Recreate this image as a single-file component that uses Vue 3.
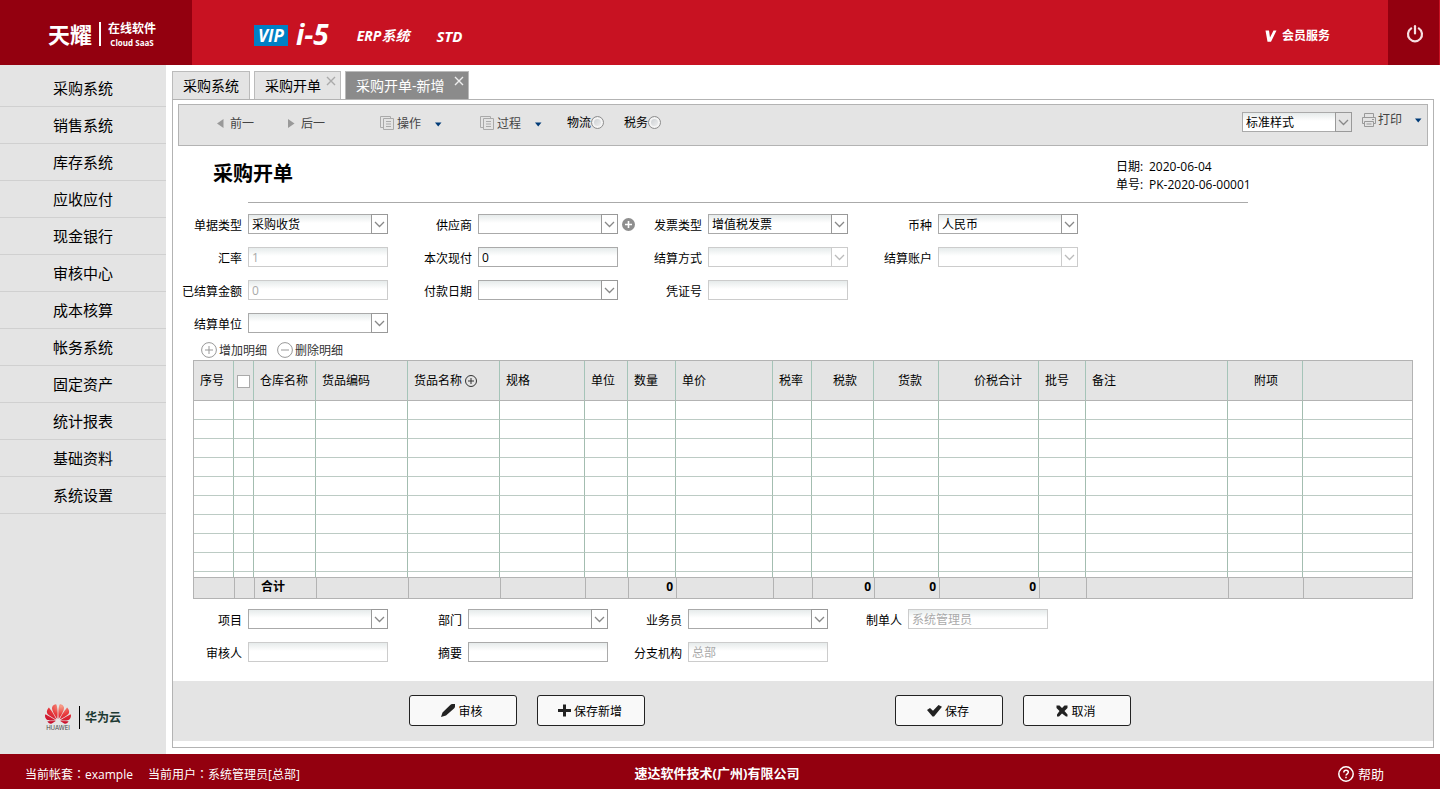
<script setup>
const modules = [
  '采购系统', '销售系统', '库存系统', '应收应付', '现金银行', '审核中心',
  '成本核算', '帐务系统', '固定资产', '统计报表', '基础资料', '系统设置',
]

const tabs = [
  { title: '采购系统' },
  { title: '采购开单', closable: true },
  { title: '采购开单-新增', closable: true, active: true },
]

const headRows = [
  [
    { id: 'docType', label: '单据类型', type: 'select', value: '采购收货' },
    { id: 'supplier', label: '供应商', type: 'select', value: '', add: true },
    { id: 'invoice', label: '发票类型', type: 'select', value: '增值税发票' },
    { id: 'currency', label: '币种', type: 'select', value: '人民币' },
  ],
  [
    { id: 'rate', label: '汇率', type: 'text', value: '1', disabled: true },
    { id: 'payNow', label: '本次现付', type: 'text', value: '0' },
    { id: 'payWay', label: '结算方式', type: 'select', value: '', disabled: true },
    { id: 'account', label: '结算账户', type: 'select', value: '', disabled: true },
  ],
  [
    { id: 'settled', label: '已结算金额', type: 'text', value: '0', disabled: true },
    { id: 'payDate', label: '付款日期', type: 'select', value: '' },
    { id: 'voucher', label: '凭证号', type: 'text', value: '', disabled: true },
  ],
  [{ id: 'settleUnit', label: '结算单位', type: 'select', value: '' }],
]

const footRows = [
  [
    { id: 'project', label: '项目', type: 'select', value: '' },
    { id: 'dept', label: '部门', type: 'select', value: '' },
    { id: 'clerk', label: '业务员', type: 'select', value: '' },
    { id: 'maker', label: '制单人', type: 'text', value: '系统管理员', disabled: true },
  ],
  [
    { id: 'auditor', label: '审核人', type: 'text', value: '', disabled: true },
    { id: 'summary', label: '摘要', type: 'text', value: '' },
    { id: 'branch', label: '分支机构', type: 'text', value: '总部', disabled: true },
  ],
]

const sections = [
  { name: 'head', rows: headRows },
  { name: 'foot', rows: footRows },
]

const columns = [
  { title: '序号', width: 40 },
  { title: '', width: 20, check: true },
  { title: '仓库名称', width: 62, total: '合计' },
  { title: '货品编码', width: 92 },
  { title: '货品名称', width: 92, add: true },
  { title: '规格', width: 85 },
  { title: '单位', width: 43 },
  { title: '数量', width: 48, total: '0' },
  { title: '单价', width: 97 },
  { title: '税率', width: 39 },
  { title: '税款', width: 62, align: 'right', total: '0' },
  { title: '货款', width: 65, align: 'right', total: '0' },
  { title: '价税合计', width: 100, align: 'right', total: '0' },
  { title: '批号', width: 47 },
  { title: '备注', width: 142 },
  { title: '附项', width: 75, align: 'center' },
  { title: '', width: 0 },
]
</script>

<template>
  <div class="app">
    <header class="top">
      <div class="brand">
        <strong class="brand-name">天耀</strong>
        <span class="brand-sub">
          <b>在线软件</b>
          <i>Cloud SaaS</i>
        </span>
      </div>
      <nav class="products">
        <a href="#" class="vip">VIP</a>
        <a href="#" class="i5">i-5</a>
        <a href="#" class="erp">ERP系统</a>
        <a href="#" class="std">STD</a>
      </nav>
      <a href="#" class="member">
        <svg width="12" height="12" viewBox="0 0 12 12"><path d="M0.5 0.5H4L5 7.5L8.5 0.5H11.5L6 11.8H2.5Z" fill="#fff" /></svg>
        会员服务
      </a>
      <button class="power" aria-label="退出">
        <svg width="18" height="18" viewBox="0 0 18 18" fill="none" stroke="#f6dfe1" stroke-width="2.2" stroke-linecap="round">
          <path d="M5.2 3.4A7 7 0 1 0 12.8 3.4" />
          <path d="M9 1.2V8.4" />
        </svg>
      </button>
    </header>

    <div class="body">
      <aside class="side">
        <nav class="menu">
          <a v-for="m in modules" :key="m" href="#">{{ m }}</a>
        </nav>
        <div class="cloud">
          <span class="cloud-mark">
            <svg width="26" height="20" viewBox="0 2.9 24 18.3">
              <defs>
                <radialGradient id="petal" cx="0.62" cy="0.1" r="0.9">
                  <stop offset="0" stop-color="#f7a08a" />
                  <stop offset="0.5" stop-color="#e8383b" />
                  <stop offset="1" stop-color="#c8102e" />
                </radialGradient>
              </defs>
              <path fill="url(#petal)" d="M3.67 6.14S1.82 7.91 1.72 9.78v.35c.08 1.51 1.22 2.4 1.22 2.4 1.83 1.79 6.26 4.04 7.3 4.55 0 0 .06.03.1-.01l.02-.04v-.04C7.52 10.8 3.67 6.14 3.67 6.14zM9.65 18.6c-.02-.08-.1-.08-.1-.08l-7.38.26c.8 1.43 2.15 2.53 3.56 2.2.96-.25 3.16-1.78 3.88-2.3.06-.05.04-.09.04-.09zm.08-.78C6.49 15.63.21 12.28.21 12.28c-.15.46-.2.9-.21 1.3v.07c0 1.07.4 1.82.4 1.82.8 1.69 2.34 2.2 2.34 2.2.7.3 1.4.31 1.4.31.12.02 4.4 0 5.54 0 .05 0 .08-.05.08-.05v-.06c0-.03-.03-.05-.03-.05zM9.06 3.19a3.42 3.42 0 00-2.57 3.15v.41c.03.6.16 1.05.16 1.05.66 2.9 3.86 7.65 4.55 8.65.05.05.1.03.1.03a.1.1 0 00.06-.1c1.06-10.6-1.11-13.42-1.11-13.42-.32.02-1.19.23-1.19.23zm8.299 2.27s-.49-1.8-2.44-2.28c0 0-.57-.14-1.17-.22 0 0-2.18 2.81-1.12 13.43.01.07.06.08.06.08.07.03.1-.03.1-.03.72-1.03 3.9-5.76 4.55-8.64 0 0 .36-1.4.02-2.34zm-2.92 13.07s-.07 0-.09.05c0 0-.01.07.03.1.7.51 2.85 2 3.88 2.3 0 0 .16.05.43.06h.14c.69-.02 1.9-.37 3-2.26l-7.4-.25zm7.83-8.41c.14-2.06-1.94-3.97-1.94-3.98 0 0-3.85 4.66-6.67 10.8 0 0-.03.08.02.13l.04.01h.06c1.06-.53 5.46-2.77 7.28-4.54 0 0 1.15-.93 1.21-2.42zm1.52 2.14s-6.28 3.37-9.52 5.55c0 0-.05.04-.03.11 0 0 .03.06.07.06 1.16 0 5.56 0 5.67-.02 0 0 .57-.02 1.27-.29 0 0 1.56-.5 2.37-2.27 0 0 .73-1.45.17-3.14z" />
            </svg>
            <small>HUAWEI</small>
          </span>
          <b>华为云</b>
        </div>
      </aside>

      <main class="main">
        <div class="tabs">
          <div v-for="t in tabs" :key="t.title" class="tab" :class="{ active: t.active, closable: t.closable }">
            <a href="#">{{ t.title }}</a>
            <button v-if="t.closable" class="close" aria-label="关闭">
              <svg width="10" height="10" viewBox="0 0 10 10" fill="none" stroke="currentColor" stroke-width="1.4"><path d="M1 1L9 9M9 1L1 9" /></svg>
            </button>
          </div>
        </div>

        <section class="panel">
          <div class="toolbar">
            <button class="tool prev">
              <svg width="7" height="9" viewBox="0 0 7 9"><path d="M6.5 0V9L0 4.5Z" fill="#999" /></svg>
              <span>前一</span>
            </button>
            <button class="tool next">
              <svg width="7" height="9" viewBox="0 0 7 9"><path d="M0 0V9L6.5 4.5Z" fill="#999" /></svg>
              <span>后一</span>
            </button>
            <button v-for="name in ['操作', '过程']" :key="name" class="tool drop">
              <svg width="14" height="14" viewBox="0 0 14 14" fill="none" stroke="#aaa">
                <path d="M3 11.5H0.5V0.5H10.5V2" />
                <path d="M3.5 2.5H13.5V13.5H3.5Z" />
                <path d="M6 5.5H11M6 8H11M6 10.5H11" />
              </svg>
              <span>{{ name }}</span>
              <svg class="caret" width="7" height="5" viewBox="0 0 7 5"><path d="M0 0.5H6.5L3.2 4.5Z" fill="#003b78" /></svg>
            </button>
            <label class="flag"><span>物流</span><input type="radio" name="logistics" /></label>
            <label class="flag"><span>税务</span><input type="radio" name="tax" /></label>
            <span class="box style-box">
              <select aria-label="打印样式"><option>标准样式</option></select>
              <span class="arrow">
                <svg width="11" height="7" viewBox="0 0 11 7" fill="none" stroke="currentColor" stroke-width="1.3"><path d="M1 1L5.5 5.5L10 1" /></svg>
              </span>
            </span>
            <button class="tool print">
              <svg width="14" height="14" viewBox="0 0 14 14" fill="none" stroke="#999">
                <path d="M2.5 4.5V0.5H11.5V4.5" />
                <path d="M2.5 10.5H0.5V4.5H13.5V10.5H11.5" />
                <path d="M2.5 8.5H11.5V13.5H2.5Z" />
                <path d="M10 6.5H12M4.5 11H9.5" />
              </svg>
              打印
              <svg class="caret" width="7" height="5" viewBox="0 0 7 5"><path d="M0 0.5H6.5L3.2 4.5Z" fill="#003b78" /></svg>
            </button>
          </div>

          <div class="doc-head">
            <h1>采购开单</h1>
            <dl>
              <div><dt>日期:</dt><dd>2020-06-04</dd></div>
              <div><dt>单号:</dt><dd>PK-2020-06-00001</dd></div>
            </dl>
          </div>
          <hr />

          <template v-for="s in sections" :key="s.name">
            <form class="fields" :class="s.name" @submit.prevent>
              <div v-for="(row, r) in s.rows" :key="r" class="row">
                <div v-for="f in row" :key="f.id" class="field">
                  <label :for="f.id">{{ f.label }}</label>
                  <span v-if="f.type === 'select'" class="box" :class="{ off: f.disabled }">
                    <select :id="f.id" :disabled="f.disabled"><option>{{ f.value }}</option></select>
                    <span class="arrow">
                      <svg width="11" height="7" viewBox="0 0 11 7" fill="none" stroke="currentColor" stroke-width="1.3"><path d="M1 1L5.5 5.5L10 1" /></svg>
                    </span>
                  </span>
                  <span v-else class="box" :class="{ off: f.disabled }">
                    <input :id="f.id" type="text" :value="f.value" :disabled="f.disabled" />
                  </span>
                  <button v-if="f.add" type="button" class="plus" aria-label="新增供应商">
                    <svg width="13" height="13" viewBox="0 0 13 13"><circle cx="6.5" cy="6.5" r="6.5" fill="#8e8e8e" /><path d="M3 6.5H10M6.5 3V10" stroke="#fff" stroke-width="1.6" /></svg>
                  </button>
                </div>
              </div>
            </form>

            <template v-if="s.name === 'head'">
              <div class="detail-tools">
                <button>
                  <svg width="16" height="16" viewBox="0 0 16 16" fill="none" stroke="#999"><circle cx="8" cy="8" r="7.4" /><path d="M4 8H12M8 4V12" /></svg>
                  <span>增加明细</span>
                </button>
                <button>
                  <svg width="16" height="16" viewBox="0 0 16 16" fill="none" stroke="#999"><circle cx="8" cy="8" r="7.4" /><path d="M4 8H12" /></svg>
                  <span>删除明细</span>
                </button>
              </div>

              <div class="grid">
                <table>
                  <colgroup>
                    <col v-for="(c, i) in columns" :key="i" :style="c.width ? { width: c.width + 'px' } : null" />
                  </colgroup>
                  <thead>
                    <tr>
                      <th v-for="(c, i) in columns" :key="i" :class="[c.align, { check: c.check }]">
                        <input v-if="c.check" type="checkbox" aria-label="全选" />
                        <template v-else>{{ c.title }}</template>
                        <svg v-if="c.add" class="col-add" width="12" height="12" viewBox="0 0 12 12" fill="none" stroke="#333"><circle cx="6" cy="6" r="5.5" /><path d="M3 6H9M6 3V9" /></svg>
                      </th>
                    </tr>
                  </thead>
                  <tbody>
                    <tr v-for="n in 10" :key="n"><td v-for="(c, i) in columns" :key="i"></td></tr>
                  </tbody>
                  <tfoot>
                    <tr>
                      <td v-for="(c, i) in columns" :key="i" :class="{ num: c.total === '0' }">{{ c.total }}</td>
                    </tr>
                  </tfoot>
                </table>
              </div>
            </template>
          </template>

          <div class="actions">
            <button>
              <svg width="14" height="13" viewBox="0 0 14 13"><path d="M0 13L1.5 8.5L9 1.2Q10 0 11.5 0H14V2.5Q14 3.5 13 4.5L5 11.5Z" fill="#222" /></svg>
              <span>审核</span>
            </button>
            <button>
              <svg width="13" height="13" viewBox="0 0 13 13"><path d="M5 0.5H8V5H13V8H8V12.5H5V8H0V5H5Z" fill="#222" /></svg>
              <span>保存新增</span>
            </button>
            <button class="save">
              <svg width="15" height="12" viewBox="0 0 15 12"><path d="M0 5L3 3L6 5.8L11.5 0L15 1.8L7 11.5H5.5Z" fill="#222" /></svg>
              <span>保存</span>
            </button>
            <button>
              <svg width="12" height="12" viewBox="0 0 12 12"><path d="M0.5 0.5H3.5L6 3L8.5 0.5H11.5V3L8.5 6L11.5 9.5V11.5H10L6 8.5L3 11.5H1V9.5L3.5 6L0.5 3Z" fill="#222" /></svg>
              <span>取消</span>
            </button>
          </div>
        </section>
      </main>
    </div>

    <footer class="bottom">
      <p class="session">
        <span>当前帐套<i>：</i>example</span>
        <span>当前用户<i>：</i>系统管理员[总部]</span>
      </p>
      <strong>速达软件技术(广州)有限公司</strong>
      <a href="#" class="help">
        <svg width="16" height="16" viewBox="0 0 16 16" fill="none" stroke="#fff" stroke-width="1.5">
          <circle cx="8" cy="8" r="7.2" />
          <path d="M5.8 6.4C5.8 3.4 10.3 3.6 10.3 6.2C10.3 7.8 8 7.8 8 9.6M8 10.8V12.3" />
        </svg>
        帮助
      </a>
    </footer>
  </div>
</template>

<style>
body {
  margin: 0;
}
</style>

<style scoped>
.app {
  --line: #b3b3b3;
  --gray: #e4e4e4;
  --wine: #93000f;
  display: flex;
  flex-direction: column;
  min-height: 100vh;
  font: 12px/18px "Open Sans", "Noto Sans CJK SC", sans-serif;
  color: #000;
  background: #fff;
}
.app * {
  box-sizing: border-box;
}
a {
  color: inherit;
  text-decoration: none;
}
button {
  padding: 0;
  border: 0;
  background: none;
  font: inherit;
  color: inherit;
  cursor: pointer;
}
svg {
  flex: none;
  display: block;
}

.top {
  display: flex;
  align-items: center;
  height: 65px;
  padding-right: 1px;
  background: #c81222;
  color: #fff;
}
.brand {
  display: flex;
  align-items: center;
  align-self: stretch;
  width: 192px;
  padding: 2px 0 0 48px;
  background: var(--wine);
}
.brand-name {
  padding-right: 7px;
  border-right: 2px solid #fff;
  font-size: 22px;
  line-height: 24px;
}
.brand-sub {
  display: grid;
  justify-items: center;
  margin-left: 7px;
}
.brand-sub b {
  line-height: 17px;
}
.brand-sub i {
  font: bold 8px/11px "Open Sans", sans-serif;
}
.products {
  display: flex;
  align-items: center;
  margin-left: 62px;
  padding-top: 6px;
  font-weight: bold;
  font-style: italic;
  font-size: 15px;
}
.vip {
  width: 34px;
  background: #0080c5;
  font-size: 17px;
  line-height: 21px;
  text-align: center;
}
.i5 {
  margin-left: 8px;
  font-size: 28px;
  line-height: 20px;
  padding-bottom: 4px;
}
.erp {
  margin-left: 28px;
  font-size: 14px;
}
.std {
  margin-left: 27px;
}
.member {
  display: flex;
  align-items: center;
  gap: 5px;
  margin: 7px 58px 0 auto;
  font-weight: bold;
}
.power {
  display: flex;
  align-items: center;
  justify-content: center;
  align-self: stretch;
  width: 51px;
  padding: 2px 0 0 2px;
  background: var(--wine);
}

.body {
  flex: 1;
  display: flex;
}
.side {
  display: flex;
  flex-direction: column;
  width: 166px;
  padding-top: 5px;
  background: var(--gray);
}
.menu a {
  display: block;
  height: 37px;
  border-bottom: 1px solid #d0d0d0;
  font-size: 15px;
  line-height: 36px;
  text-align: center;
}
.cloud {
  display: flex;
  align-items: center;
  margin: auto 0 23px 45px;
}
.cloud-mark {
  padding-right: 8px;
}
.cloud-mark small {
  display: block;
  width: 26px;
  font: 6px/7px Inter, sans-serif;
  color: #444;
  text-align: center;
}
.cloud b {
  padding-left: 5px;
  border-left: 1px solid #000;
  color: #1d3a33;
  line-height: 23px;
}

.main {
  flex: 1;
  min-width: 0;
  display: flex;
  flex-direction: column;
  padding: 6px;
}
.tabs {
  display: flex;
  gap: 4px;
}
.tab {
  position: relative;
  height: 28px;
  padding: 0 10px;
  border: 1px solid #bbb;
  border-bottom: 0;
  background: var(--gray);
  font-size: 14px;
  line-height: 28px;
}
.tab.closable {
  padding-right: 19px;
}
.tab.active {
  padding-right: 23px;
  background: #8b8b8b;
  color: #fff;
}
.close {
  position: absolute;
  top: 4px;
  right: 4px;
  color: #aaa;
}
.active .close {
  color: #eee;
}
.panel {
  flex: 1;
  display: flex;
  flex-direction: column;
  padding: 4px 0 6px;
  border: 1px solid var(--line);
}
.toolbar {
  display: flex;
  align-items: flex-start;
  height: 42px;
  margin: 0 5px;
  padding: 7px 5px 0 38px;
  border: 1px solid var(--line);
  background: var(--gray);
}
.tool {
  display: flex;
  align-items: center;
  height: 22px;
  color: #444;
}
.tool span,
.flag span,
.detail-tools span,
.actions span {
  padding-top: 2px;
}
.prev,
.next {
  gap: 6px;
  width: 71px;
}
.next {
  width: 92px;
}
.drop {
  gap: 3px;
  width: 100px;
}
.drop .caret,
.print .caret {
  margin-left: 11px;
}
.drop .caret {
  margin-top: 2px;
}
.flag {
  display: flex;
  align-items: center;
  height: 20px;
  margin-right: 20px;
}
.flag + .flag {
  margin-right: 0;
}
.drop + .flag {
  margin-left: -13px;
}
.flag input {
  width: 13px;
  height: 13px;
  margin: 0;
  appearance: none;
  border: 1px solid #8e8e8e;
  border-radius: 50%;
  background: linear-gradient(135deg, #c4c8cc, #f6f6f6);
  box-shadow: inset 0 0 0 2px #f4f4f4;
}
.style-box {
  width: 110px;
  margin: 0 10px 0 auto;
}
.print {
  gap: 2px;
  height: 16px;
}

.box {
  position: relative;
  display: flex;
  flex: none;
  width: 140px;
  height: 20px;
  border: 1px solid #aaa;
  background: linear-gradient(#e6ebeb, #fff 8px);
  color: #000;
}
.style-box.box {
  width: 110px;
}
.box.off {
  border-color: #ccc;
  color: #aaa;
}
.box select,
.box input {
  width: 100%;
  min-width: 0;
  height: 18px;
  margin: 0;
  padding: 1px 3px 0;
  border: 0;
  border-radius: 0;
  outline: 0;
  appearance: none;
  background: none;
  font: inherit;
  line-height: 18px;
  color: inherit;
  opacity: 1;
}
.arrow {
  position: absolute;
  top: -1px;
  right: -1px;
  display: flex;
  align-items: center;
  justify-content: center;
  width: 17px;
  height: 20px;
  border: 1px solid #999;
  background: #fff;
  color: #888;
  pointer-events: none;
}
.style-box .arrow {
  background: var(--gray);
}
.off .arrow {
  border-color: #ccc;
  color: #bbb;
}

.doc-head {
  display: flex;
  justify-content: space-between;
  max-width: 1075px;
  padding: 12px 0 8px 40px;
}
h1 {
  margin: 0;
  font-size: 20px;
  line-height: 32px;
}
dl {
  width: 132px;
  margin: 0;
  white-space: nowrap;
}
dl div {
  display: flex;
}
dt {
  flex: none;
  width: 33px;
}
dd {
  margin: 0;
}
hr {
  width: 1000px;
  height: 1px;
  margin: 0 0 0 75px;
  border: 0;
  background: #aaa;
}
.fields {
  display: grid;
  gap: 13px;
  margin-top: 11px;
}
.row {
  display: grid;
  grid-template-columns: repeat(4, 230px);
}
.foot {
  margin: 10px 0 19px;
}
.foot .row {
  grid-template-columns: repeat(4, 220px);
}
.field {
  display: flex;
  align-items: center;
  height: 20px;
}
.field label {
  flex: none;
  width: 69px;
  margin-right: 6px;
  padding-top: 4px;
  text-align: right;
}
.plus {
  margin-left: 4px;
}
.detail-tools {
  display: flex;
  gap: 10px;
  margin: 9px 0 2px 28px;
}
.detail-tools button {
  display: flex;
  align-items: center;
  gap: 2px;
  height: 16px;
  color: #333;
}

.grid {
  margin: 0 20px;
  border: 1px solid var(--line);
}
table {
  width: 100%;
  table-layout: fixed;
  border-collapse: separate;
  border-spacing: 0;
}
th {
  height: 40px;
  padding: 0 0 0 6px;
  border-right: 1px solid #a5c4b8;
  border-bottom: 1px solid var(--line);
  background: var(--gray);
  font-weight: normal;
  text-align: left;
  white-space: nowrap;
}
th.right {
  padding-right: 16px;
  text-align: right;
}
th.center {
  padding-left: 2px;
  text-align: center;
}
th.check {
  padding: 2px 0 0 3px;
}
th input {
  display: block;
  width: 13px;
  height: 13px;
  margin: 0;
  appearance: none;
  border: 1px solid #aaa;
  background: #fff;
}
.col-add {
  display: inline-block;
  margin-left: 3px;
  vertical-align: -2px;
}
tbody td {
  height: 19px;
  padding: 0;
  border-right: 1px solid #a3bdb0;
  border-bottom: 1px solid #bccbc4;
}
tbody tr:last-child td {
  height: 5px;
  border-bottom: 0;
}
th:last-child,
tbody td:last-child {
  border-right: 0;
}
tfoot td {
  height: 21px;
  padding: 0 3px 2px 6px;
  border-top: 1px solid var(--line);
  border-left: 1px solid var(--line);
  background: var(--gray);
  font-weight: bold;
}
tfoot td:first-child {
  border-left: 0;
}
tfoot .num {
  text-align: right;
}

.actions {
  display: flex;
  gap: 20px;
  height: 60px;
  margin-top: auto;
  padding: 14px 0 0 236px;
  background: var(--gray);
}
.actions button {
  display: flex;
  align-items: center;
  justify-content: center;
  gap: 3px;
  width: 108px;
  height: 31px;
  padding-right: 2px;
  border: 1px solid #222;
  border-radius: 3px;
  background: #f9f9f9;
}
.actions .save {
  margin-left: 230px;
}

.bottom {
  display: grid;
  grid-template-columns: 1fr auto 1fr;
  align-items: center;
  height: 35px;
  padding: 3px 31px 0 25px;
  background: var(--wine);
  color: #fff;
}
.session {
  display: flex;
  gap: 15px;
  margin: 0;
  padding-top: 2px;
}
.session i {
  font-family: "Noto Sans CJK TC", sans-serif;
  font-style: normal;
}
.bottom strong {
  font-size: 13px;
}
.help {
  display: flex;
  align-items: center;
  justify-self: end;
  gap: 4px;
  margin-right: 25px;
  padding-top: 1px;
  font-size: 13px;
}
</style>
